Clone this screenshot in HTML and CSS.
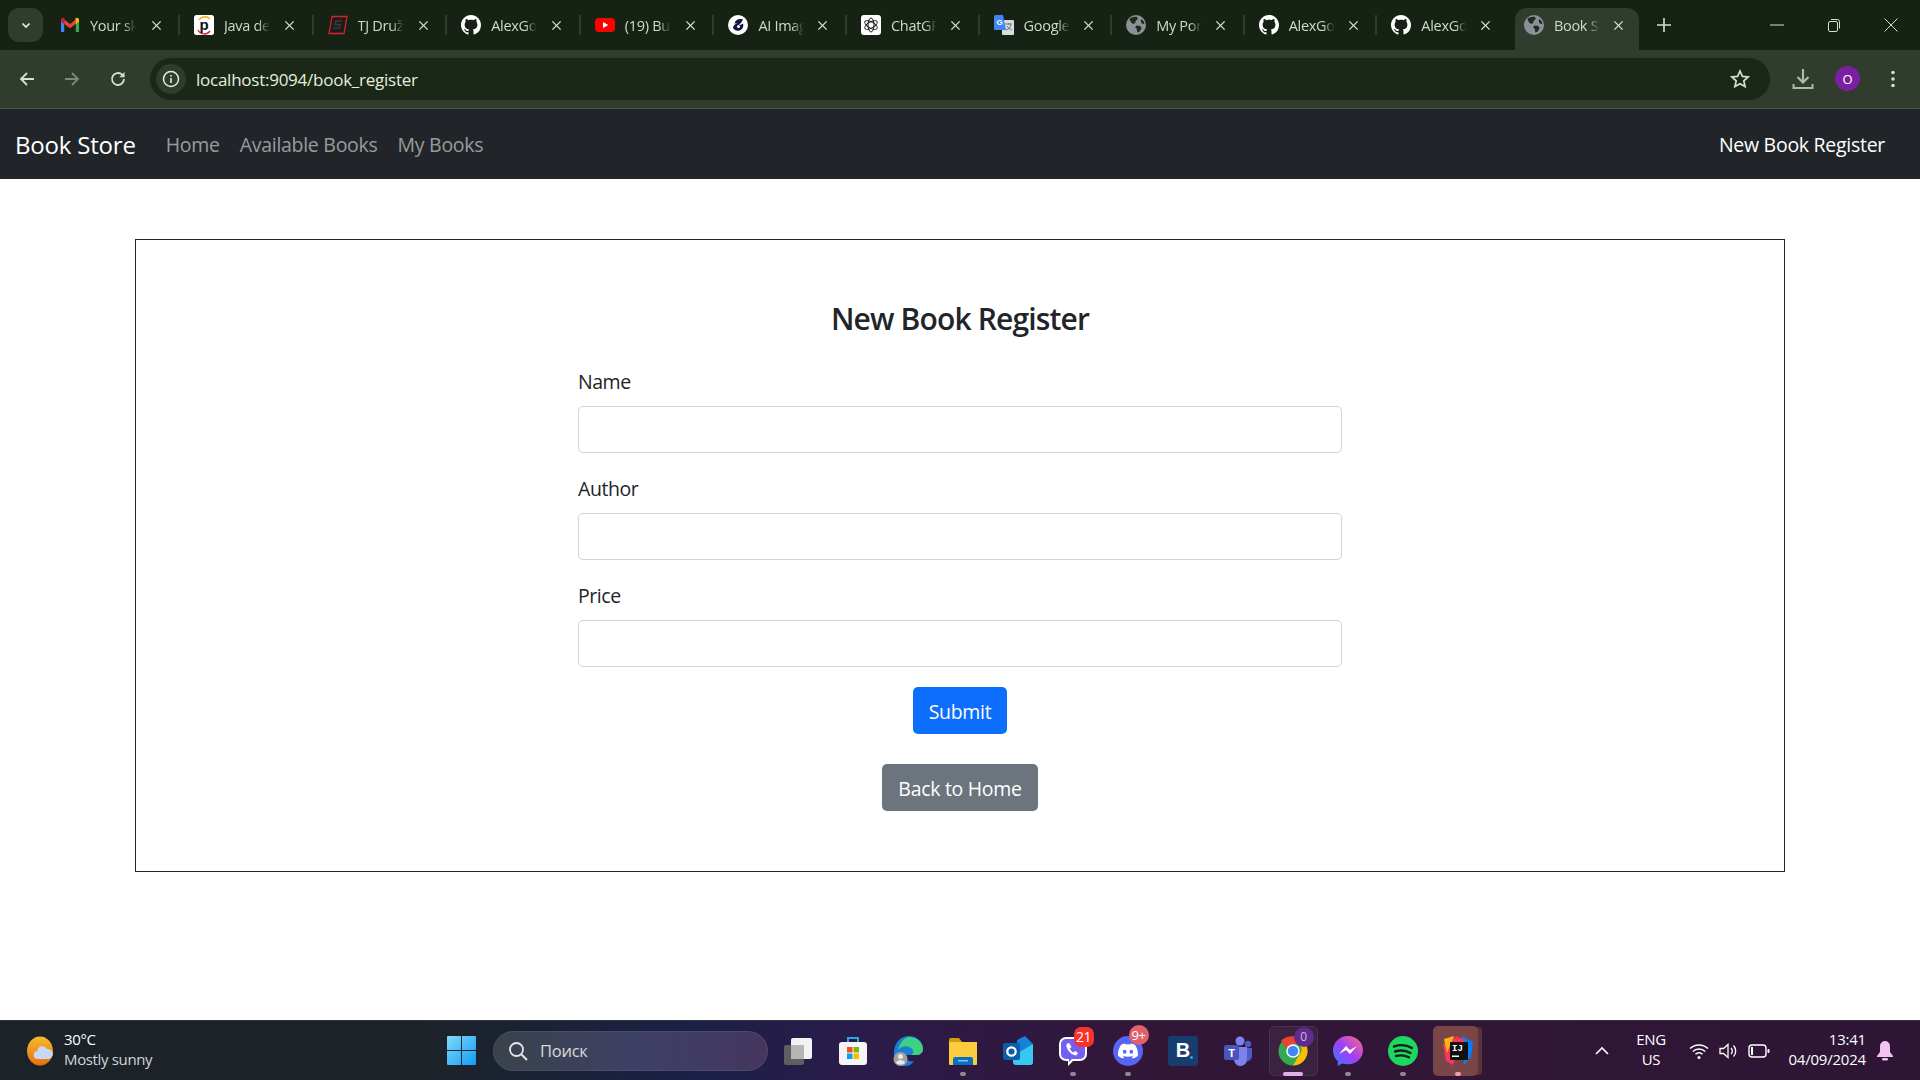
FILE: index.html
```html
<!DOCTYPE html>
<html lang="en">
<head>
<meta charset="utf-8">
<title>Book Store</title>
<link rel="stylesheet" href="styles.css">
</head>
<body>
<svg class="defs" width="0" height="0" aria-hidden="true">
  <defs>
    <symbol id="gh" viewBox="0 0 16 16"><path fill="#fff" d="M8 0C3.58 0 0 3.58 0 8c0 3.54 2.29 6.53 5.47 7.59.4.07.55-.17.55-.38 0-.19-.01-.82-.01-1.49-2.01.37-2.53-.49-2.69-.94-.09-.23-.48-.94-.82-1.13-.28-.15-.68-.52-.01-.53.63-.01 1.08.58 1.23.82.72 1.21 1.87.87 2.33.66.07-.52.28-.87.51-1.07-1.78-.2-3.64-.89-3.64-3.95 0-.87.31-1.59.82-2.15-.08-.2-.36-1.02.08-2.12 0 0 .67-.21 2.2.82.64-.18 1.32-.27 2-.27.68 0 1.36.09 2 .27 1.53-1.04 2.2-.82 2.2-.82.44 1.1.16 1.92.08 2.12.51.56.82 1.27.82 2.15 0 3.07-1.87 3.75-3.65 3.95.29.25.54.73.54 1.48 0 1.07-.01 1.93-.01 2.2 0 .21.15.46.55.38A8.013 8.013 0 0016 8c0-4.42-3.58-8-8-8z"/></symbol>
    <symbol id="globe" viewBox="0 0 18 18"><circle cx="9" cy="9" r="9" fill="#8b9198"/><path fill="#1f2a1d" d="M3 3.5c2-1.6 4.5-2.3 7-1.8l.6 2-2 1.6-.4 2.2-2.4.3-1.6-1.8zM9.5 9.5l3.3.4 1.3 2-2 3.2-1.8.7-.7-3.5-1.5-1.3zM14 3.5l2 2.4.6 2.4-2.6-.8-.8-2.4z"/></symbol>
    <symbol id="x" viewBox="0 0 12 12"><path d="M1.5 1.5l9 9M10.5 1.5l-9 9" stroke="#d5e0cf" stroke-width="1.5" fill="none"/></symbol>
  </defs>
</svg>

<header class="chrome">
  <div class="tabstrip">
    <button class="tab-search" type="button"><svg class="ic12" viewBox="0 0 12 12"><path d="M2.5 4.5L6 8l3.5-3.5" stroke="#e4eede" stroke-width="1.7" fill="none"/></svg></button>
    <div class="tabs">
      <div class="tab">
        <svg class="fav" viewBox="0 0 20 20"><path fill="#4285f4" d="M1 17h3.2V8.6L1 5.4z"/><path fill="#34a853" d="M15.8 17H19V5.4l-3.2 3.2z"/><path fill="#ea4335" d="M4.2 9V4.5L10 9l5.8-4.5V9L10 13.2z"/><path fill="#c5221f" d="M1 5.2C1 3 3.3 2.2 4.6 3.5L4.2 9 1 6.5z"/><path fill="#fbbc04" d="M19 5.2c0-2.2-2.3-3-3.6-1.7l.4 5.5L19 6.500z"/></svg>
        <span class="tab-title">Your sk</span><svg class="close" viewBox="0 0 12 12"><use href="#x"/></svg>
      </div>
      <div class="tab">
        <svg class="fav" viewBox="0 0 20 20"><rect width="20" height="20" rx="2.500" fill="#fff"/><path d="M5 5a7 7 0 0 1 11-1" stroke="#f5a623" stroke-width="1.400" fill="none"/><path d="M4 15a7 7 0 0 0 12 1" stroke="#d8232a" stroke-width="1.400" fill="none"/><text x="10" y="14.500" class="fav-p">p</text></svg>
        <span class="tab-title">Java de</span><svg class="close" viewBox="0 0 12 12"><use href="#x"/></svg>
      </div>
      <div class="tab">
        <svg class="fav" viewBox="0 0 20 20"><path d="M4 1.500h15l-3 17H1z" fill="#1c1c1c" stroke="#d8232a" stroke-width="1.300" stroke-linejoin="round"/><path d="M14 6H8L7 9.500h5L11 13H5" stroke="#3b3b3b" stroke-width="1.600" fill="none"/></svg>
        <span class="tab-title">TJ Druž</span><svg class="close" viewBox="0 0 12 12"><use href="#x"/></svg>
      </div>
      <div class="tab">
        <svg class="fav"><use href="#gh"/></svg>
        <span class="tab-title">AlexGo</span><svg class="close" viewBox="0 0 12 12"><use href="#x"/></svg>
      </div>
      <div class="tab">
        <svg class="fav" viewBox="0 0 20 20"><rect y="3" width="20" height="14" rx="4" fill="#f00"/><path d="M8 7l5.200 3L8 13z" fill="#fff"/></svg>
        <span class="tab-title">(19) Bu</span><svg class="close" viewBox="0 0 12 12"><use href="#x"/></svg>
      </div>
      <div class="tab">
        <svg class="fav" viewBox="0 0 20 20"><circle cx="10" cy="10" r="10" fill="#fff"/><path d="M15 4.500c-4-1.500-8 .5-8.500 4l3.500-.5c-3 1-5 2.500-5 5 1 2 4 3.500 6.500 2.500 3-1 4.500-4 3.500-7-1.500 1-3 1.500-4 1.500 1.500-1.500 3-3.500 4-5.500z" fill="#141640"/><circle cx="10.500" cy="11.500" r="1.500" fill="#fff"/></svg>
        <span class="tab-title">AI Imag</span><svg class="close" viewBox="0 0 12 12"><use href="#x"/></svg>
      </div>
      <div class="tab">
        <svg class="fav" viewBox="0 0 20 20"><rect width="20" height="20" rx="3" fill="#fff"/><g fill="none" stroke="#1a1a1a" stroke-width="1"><ellipse cx="10" cy="10" rx="3" ry="7"/><ellipse cx="10" cy="10" rx="3" ry="7" transform="rotate(60 10 10)"/><ellipse cx="10" cy="10" rx="3" ry="7" transform="rotate(120 10 10)"/></g></svg>
        <span class="tab-title">ChatGP</span><svg class="close" viewBox="0 0 12 12"><use href="#x"/></svg>
      </div>
      <div class="tab">
        <svg class="fav" viewBox="0 0 20 20"><rect x="8" y="5" width="12" height="15" rx="1" fill="#d9dce0"/><path d="M11 9h7M14.500 8v1.500M12 15c3-1 4.500-3 5-5.500M13 11c1 2 3 3.500 5 4" stroke="#6b7076" stroke-width="1" fill="none"/><path d="M1.500 0H9l3 15H1.500A1.500 1.500 0 0 1 0 13.500V1.500A1.500 1.500 0 0 1 1.500 0z" fill="#4285f4"/><text x="5.500" y="10" class="fav-g">G</text></svg>
        <span class="tab-title">Google</span><svg class="close" viewBox="0 0 12 12"><use href="#x"/></svg>
      </div>
      <div class="tab">
        <svg class="fav"><use href="#globe"/></svg>
        <span class="tab-title">My Por</span><svg class="close" viewBox="0 0 12 12"><use href="#x"/></svg>
      </div>
      <div class="tab">
        <svg class="fav"><use href="#gh"/></svg>
        <span class="tab-title">AlexGo</span><svg class="close" viewBox="0 0 12 12"><use href="#x"/></svg>
      </div>
      <div class="tab tab-presel">
        <svg class="fav"><use href="#gh"/></svg>
        <span class="tab-title">AlexGo</span><svg class="close" viewBox="0 0 12 12"><use href="#x"/></svg>
      </div>
      <div class="tab tab-active">
        <svg class="fav"><use href="#globe"/></svg>
        <span class="tab-title">Book S</span><svg class="close" viewBox="0 0 12 12"><use href="#x"/></svg>
      </div>
    </div>
    <svg class="newtab" viewBox="0 0 14 14"><path d="M7 0v14M0 7h14" stroke="#d5e0cf" stroke-width="1.600"/></svg>
    <div class="winctl">
      <svg class="win-btn" viewBox="0 0 14 14"><path d="M0 7h14" stroke="#d5e0cf" stroke-width="1"/></svg>
      <svg class="win-btn" viewBox="0 0 14 14"><rect x="1.500" y="3.500" width="9" height="10" rx="1.500" fill="none" stroke="#d5e0cf"/><path d="M4 1.500h6.500a2 2 0 0 1 2 2v7" fill="none" stroke="#d5e0cf"/></svg>
      <svg class="win-btn" viewBox="0 0 14 14"><path d="M.5.500l13 13M13.500.500l-13 13" stroke="#d5e0cf" stroke-width="1"/></svg>
    </div>
  </div>
  <div class="toolbar">
    <svg class="tool" viewBox="0 0 18 18"><path d="M16 9H3M9 3L3 9l6 6" stroke="#d5e0cf" stroke-width="1.800" fill="none"/></svg>
    <svg class="tool" viewBox="0 0 18 18"><path d="M2 9h13M9 3l6 6-6 6" stroke="#7d8a78" stroke-width="1.800" fill="none"/></svg>
    <svg class="tool" viewBox="0 0 18 18"><path d="M15 9a6 6 0 1 1-1.800-4.300L15 6.500" stroke="#d5e0cf" stroke-width="1.800" fill="none"/><path d="M15.500 2v5.200h-5.200z" fill="#d5e0cf"/></svg>
    <div class="omnibox">
      <span class="info"><svg class="ic18" viewBox="0 0 18 18"><circle cx="9" cy="9" r="7.500" fill="none" stroke="#e4eede" stroke-width="1.500"/><path d="M9 8v5M9 5v1.600" stroke="#e4eede" stroke-width="1.600"/></svg></span>
      <span class="url">localhost:9094/book_register</span>
      <svg class="star" viewBox="0 0 20 20"><path d="M10 2l2.400 5.400 5.800.6-4.400 3.900 1.300 5.700L10 14.700l-5.100 2.900 1.300-5.700L1.800 8l5.800-.6z" fill="none" stroke="#d5e0cf" stroke-width="1.700"/></svg>
    </div>
    <svg class="tool-dl" viewBox="0 0 22 22"><path d="M11 1v13M5.500 9l5.500 5.500L16.500 9" stroke="#a9bda3" stroke-width="2.200" fill="none"/><path d="M1.500 16v4h19v-4" stroke="#a9bda3" stroke-width="2" fill="none"/></svg>
    <span class="avatar">O</span>
    <svg class="tool-menu" viewBox="0 0 4 18"><circle cx="2" cy="2.500" r="1.800" fill="#d5e0cf"/><circle cx="2" cy="9" r="1.800" fill="#d5e0cf"/><circle cx="2" cy="15.500" r="1.800" fill="#d5e0cf"/></svg>
  </div>
</header>

<nav class="navbar">
  <a class="brand" href="#">Book Store</a>
  <a class="nav-link" href="#">Home</a>
  <a class="nav-link" href="#">Available Books</a>
  <a class="nav-link" href="#">My Books</a>
  <a class="nav-link nav-right" href="#">New Book Register</a>
</nav>

<main class="page">
  <section class="card">
    <h3 class="heading">New Book Register</h3>
    <form class="form">
      <div class="field"><label class="label" for="name">Name</label><input class="input" id="name" type="text"></div>
      <div class="field"><label class="label" for="author">Author</label><input class="input" id="author" type="text"></div>
      <div class="field"><label class="label" for="price">Price</label><input class="input" id="price" type="text"></div>
      <div class="btn-row"><button class="btn btn-primary" type="button">Submit</button></div>
    </form>
    <div class="btn-row btn-row-back"><a class="btn btn-secondary" href="#">Back to Home</a></div>
  </section>
</main>

<footer class="taskbar">
  <div class="weather">
    <svg class="weather-ic" viewBox="0 0 28 30"><defs><linearGradient id="sun" x1="0" y1="0" x2="0" y2="1"><stop offset="0" stop-color="#f2bb2a"/><stop offset="1" stop-color="#ec6d10"/></linearGradient></defs><ellipse cx="13" cy="15" rx="13" ry="14.500" fill="url(#sun)"/><path d="M11 23a4 4 0 0 1-.5-8 5 5 0 0 1 9.500-2 5 5 0 0 1 1.500 10z" fill="#c5d9f5"/></svg>
    <div class="weather-text"><span class="temp">30°C</span><span class="cond">Mostly sunny</span></div>
  </div>
  <svg class="winlogo" viewBox="0 0 29 29"><defs><linearGradient id="wl" x1="0" y1="0" x2="1" y2="1"><stop offset="0" stop-color="#7fdcf8"/><stop offset="1" stop-color="#0f9cf5"/></linearGradient></defs><path fill="url(#wl)" d="M1 0h13v14H0V1a1 1 0 0 1 1-1zM15 0h13a1 1 0 0 1 1 1v13H15zM0 15h14v14H1a1 1 0 0 1-1-1zM15 15h14v13a1 1 0 0 1-1 1H15z"/></svg>
  <div class="searchbox">
    <svg class="ic20" viewBox="0 0 20 20"><circle cx="8.500" cy="8.500" r="6.500" fill="none" stroke="#e6e6e6" stroke-width="1.800"/><path d="M13.500 13.500L19 19" stroke="#e6e6e6" stroke-width="2"/></svg>
    <span class="search-text">Поиск</span>
  </div>
  <div class="apps">
    <div class="app"><svg class="app-ic" viewBox="0 0 30 30"><rect x="1" y="9" width="20" height="20" rx="2" fill="#5f5f5f"/><rect x="8" y="2" width="21" height="21" rx="2" fill="#f2f2f2"/><rect x="8" y="9" width="13" height="14" fill="#b5b5b5"/></svg></div>
    <div class="app"><svg class="app-ic" viewBox="0 0 30 30"><path d="M10 7V2h10v5" fill="none" stroke="#2aa6e8" stroke-width="2"/><rect x="1" y="6" width="28" height="23" rx="3" fill="#f4f4f4"/><rect x="9" y="11" width="5.500" height="5.500" fill="#f25022"/><rect x="15.500" y="11" width="5.500" height="5.500" fill="#7fba00"/><rect x="9" y="17.500" width="5.500" height="5.500" fill="#00a4ef"/><rect x="15.500" y="17.500" width="5.500" height="5.500" fill="#ffb900"/></svg></div>
    <div class="app"><svg class="app-ic" viewBox="0 0 30 30"><path d="M1 15C2 5 9 0 16 0c8 0 14 6 14 13 0 4-3 6-7 6H12c0 5 4 7 9 6-2 3-5 5-9 5C5 30 0 23 1 15z" fill="#1a7fd4"/><path d="M30 13c0 4-3 6-7 6h-5c3-1 3-5 0-7-4-3-10-2-13 2C7 6 12 1 16 1c8 0 14 5 14 12z" fill="#3ed17f"/><circle cx="7.500" cy="23" r="7" fill="#9e9e9e"/><circle cx="7.500" cy="20.500" r="2.500" fill="#e8e8e8"/><path d="M3 27c1-4 8-4 9 0-2 2-7 2-9 0z" fill="#e8e8e8"/></svg></div>
    <div class="app"><svg class="app-ic" viewBox="0 0 30 30"><path d="M1 4a2 2 0 0 1 2-2h8l3 4h15v6H1z" fill="#d69a10"/><path d="M1 6h28v22a1 1 0 0 1-1 1H2a1 1 0 0 1-1-1z" fill="#fbcd3e"/><path d="M5 29v-6a2 2 0 0 1 2-2h16a2 2 0 0 1 2 2v6z" fill="#0a6fc2"/><rect x="10" y="24" width="10" height="1.500" fill="#7fc4f5"/></svg><span class="pip"></span></div>
    <div class="app"><svg class="app-ic" viewBox="0 0 30 30"><path d="M14 4l8-4 8 8v18a3 3 0 0 1-3 3H13z" fill="#1283d8"/><path d="M10 20l20-12v18a3 3 0 0 1-3 3H13a3 3 0 0 1-3-3z" fill="#35c9f0"/><rect x="0" y="7" width="17" height="17" rx="2" fill="#0c5ea8"/><circle cx="8.500" cy="15.500" r="4.200" fill="none" stroke="#fff" stroke-width="2.200"/></svg></div>
    <div class="app"><svg class="app-ic" viewBox="0 0 30 30"><path d="M8 1h14a7 7 0 0 1 7 7v10a7 7 0 0 1-7 7h-7l-5 5v-5H8a7 7 0 0 1-7-7V8a7 7 0 0 1 7-7z" fill="#fff"/><path d="M8 3h14a5 5 0 0 1 5 5v10a5 5 0 0 1-5 5h-8l-3 3v-3H8a5 5 0 0 1-5-5V8a5 5 0 0 1 5-5z" fill="#7360f2"/><path d="M10 7c-2 1-2 3-1 5 1 3 4 6 7 7 2 1 3 0 4-2l-3-2-1.500 1.500c-2-1-3-2.500-3.800-4L13.500 11 11.500 7.500z" fill="#fff"/></svg><span class="badge badge-red">21</span><span class="pip"></span></div>
    <div class="app"><svg class="app-ic" viewBox="0 0 30 30"><circle cx="15" cy="15" r="15" fill="#5865f2"/><svg x="5" y="5" width="20" height="20" viewBox="0 0 24 24"><path fill="#fff" d="M20.317 4.37a19.791 19.791 0 0 0-4.885-1.515.074.074 0 0 0-.079.037c-.21.375-.444.864-.608 1.25a18.27 18.27 0 0 0-5.487 0 12.64 12.64 0 0 0-.617-1.25.077.077 0 0 0-.079-.037A19.736 19.736 0 0 0 3.677 4.37a.07.07 0 0 0-.032.027C.533 9.046-.32 13.58.099 18.057a.082.082 0 0 0 .031.057 19.9 19.9 0 0 0 5.993 3.03.078.078 0 0 0 .084-.028 14.09 14.09 0 0 0 1.226-1.994.076.076 0 0 0-.041-.106 13.107 13.107 0 0 1-1.872-.892.077.077 0 0 1-.008-.128 10.2 10.2 0 0 0 .372-.292.074.074 0 0 1 .077-.01c3.928 1.793 8.18 1.793 12.062 0a.074.074 0 0 1 .078.01c.12.098.246.198.373.292a.077.077 0 0 1-.006.127 12.299 12.299 0 0 1-1.873.892.077.077 0 0 0-.041.107c.36.698.772 1.362 1.225 1.993a.076.076 0 0 0 .084.028 19.839 19.839 0 0 0 6.002-3.03.077.077 0 0 0 .032-.054c.5-5.177-.838-9.674-3.549-13.66a.061.061 0 0 0-.031-.03zM8.020 15.330c-1.183 0-2.157-1.085-2.157-2.419 0-1.333.956-2.419 2.157-2.419 1.210 0 2.176 1.096 2.157 2.420 0 1.333-.956 2.418-2.157 2.418zm7.975 0c-1.183 0-2.157-1.085-2.157-2.419 0-1.333.955-2.419 2.157-2.419 1.210 0 2.176 1.096 2.157 2.420 0 1.333-.946 2.418-2.157 2.418z"/></svg></svg><span class="badge badge-pink">9+</span><span class="pip"></span></div>
    <div class="app"><span class="booking">B<i class="booking-dot"></i></span></div>
    <div class="app"><svg class="app-ic" viewBox="0 0 30 30"><circle cx="17" cy="5" r="4.500" fill="#7b83eb"/><circle cx="25" cy="8" r="3.200" fill="#5059c9"/><path d="M21 12h8v9a5 5 0 0 1-6 4z" fill="#5059c9"/><path d="M9 11h15v12a6.500 6.500 0 0 1-13 1z" fill="#7b83eb"/><rect x="1" y="9" width="15" height="15" rx="2" fill="#4b53bc"/><text x="8.500" y="21" class="teams-t">T</text></svg></div>
    <div class="app app-box"><svg class="app-ic" viewBox="0 0 30 30"><circle cx="15" cy="15" r="14.500" fill="#34a853"/><path d="M15 .5A14.500 14.500 0 0 1 28 8.500H15A6.500 6.500 0 0 0 8.800 13L3 4.800A14.500 14.500 0 0 1 15 .5z" fill="#ea4335"/><path d="M28 8.500A14.500 14.500 0 0 1 15 29.500l6-10.500a6.500 6.500 0 0 0 0-10.500z" fill="#fbbc04"/><circle cx="15" cy="15" r="6.800" fill="#fff"/><circle cx="15" cy="15" r="5.300" fill="#4285f4"/></svg><span class="badge badge-purple">0</span><span class="pip pip-wide"></span></div>
    <div class="app"><svg class="app-ic" viewBox="0 0 30 30"><defs><linearGradient id="ms" x1="0" y1="1" x2="1" y2="0"><stop offset="0" stop-color="#2f7bff"/><stop offset=".5" stop-color="#a23ef5"/><stop offset="1" stop-color="#ff6f7d"/></linearGradient></defs><path d="M15 0C6.500 0 0 6.200 0 14.500c0 4.300 1.800 8 4.700 10.600V30l4.500-2.500c1.800.5 3.700.8 5.800.8 8.500 0 15-6.200 15-14S23.500 0 15 0z" fill="url(#ms)"/><path d="M6 18l7-8 4 4 7-4-7 8-4-4z" fill="#fff"/></svg><span class="pip"></span></div>
    <div class="app"><svg class="app-ic" viewBox="0 0 30 30"><circle cx="15" cy="15" r="15" fill="#1ed760"/><path d="M6 10.500c6-2 13-1.500 18 1.500M7 15.500c5-1.500 11-1 15.500 1.500M8 20c4-1 9-.8 13 1.300" stroke="#14221a" stroke-width="2.400" stroke-linecap="round" fill="none"/></svg><span class="pip"></span></div>
    <div class="app app-active"><svg class="app-ic" viewBox="0 0 30 30"><path d="M0 8l11-7 6 4-7 24-7-4z" fill="#f7375c"/><path d="M1 3l10-3-7 17z" fill="#fdb60d"/><path d="M19 0l11 6-2 15-7 8z" fill="#087cfa"/><path d="M13 0l9 4-6 8z" fill="#fe315d"/><rect x="7" y="6" width="18" height="18" fill="#111"/><text x="9" y="15" class="ij-t">IJ</text><rect x="9" y="19.500" width="7" height="1.500" fill="#fff"/></svg><span class="pip pip-pink"></span></div>
  </div>
  <div class="tray">
    <svg class="chev" viewBox="0 0 14 8"><path d="M1 7l6-6 6 6" stroke="#fff" stroke-width="1.600" fill="none"/></svg>
    <div class="lang"><span>ENG</span><span>US</span></div>
    <svg class="tray-ic tray-wifi" viewBox="0 0 20 18"><path d="M1 6.500a13 13 0 0 1 18 0M3.800 9.500a9 9 0 0 1 12.400 0M6.500 12.300a5 5 0 0 1 7 0" stroke="#fff" stroke-width="1.500" fill="none"/><circle cx="10" cy="15.500" r="1.500" fill="#fff"/></svg>
    <svg class="tray-ic tray-vol" viewBox="0 0 20 18"><path d="M1 6.500h3.500L9 2.500v13l-4.500-4H1z" fill="none" stroke="#fff" stroke-width="1.300"/><path d="M12 6a4 4 0 0 1 0 6M14.500 3.500a8 8 0 0 1 0 11" stroke="#fff" stroke-width="1.300" fill="none"/></svg>
    <svg class="tray-ic tray-bat" viewBox="0 0 22 16"><rect x="1" y="2" width="17" height="12" rx="3" fill="none" stroke="#fff" stroke-width="1.400"/><rect x="3" y="4" width="2" height="8" fill="#fff"/><rect x="19.500" y="6" width="2" height="4" rx="1" fill="#fff"/></svg>
    <div class="clock"><span>13:41</span><span>04/09/2024</span></div>
    <svg class="bell" viewBox="0 0 16 20"><path d="M8 0a5 5 0 0 1 5 5v6l3 4v1H0v-1l3-4V5a5 5 0 0 1 5-5z" fill="#efc2f0"/><rect x="5" y="17" width="6" height="2.500" rx="1.200" fill="#efc2f0"/></svg>
  </div>
</footer>
</body>
</html>
```
FILE: styles.css
```css
* { box-sizing: border-box; }
html, body { margin: 0; height: 100%; overflow: hidden; }
body {
  display: flex;
  flex-direction: column;
  height: 1080px;
  background: #fff;
  color: #212529;
  font-family: "Open Sans", "Noto Sans", sans-serif;
}
.defs { position: absolute; }
svg { display: block; flex: none; overflow: visible; }

/* browser chrome */
.chrome { flex: none; }
.tabstrip {
  height: 50px;
  background: #162213;
  display: flex;
  align-items: flex-start;
  padding-left: 8px;
}
.tab-search {
  width: 35px;
  height: 34px;
  margin-top: 8px;
  border: 0;
  border-radius: 11px;
  background: #303c2d;
  display: flex;
  align-items: center;
  justify-content: center;
  padding: 0;
}
.ic12 { width: 12px; height: 12px; }
.tabs { display: flex; margin-left: 3px; margin-top: 8px; height: 42px; }
.tab {
  width: 132.600px;
  height: 42px;
  display: flex;
  align-items: center;
  padding: 0 18.500px 8px 14px;
  position: relative;
}
.tab:first-child { width: 134px; }
.tab:nth-child(n+2):nth-child(-n+5) { width: 133.600px; }
.tab::after {
  content: "";
  position: absolute;
  right: 0;
  top: 7px;
  height: 20px;
  width: 2px;
  background: #303c2d;
}
.tab-presel::after, .tab-active::after { display: none; }
.tab.tab-active {
  width: 124px;
  background: #303c2d;
  border-radius: 12px 12px 0 0;
  padding: 0 14.500px 8px 9px;
  margin-left: 5px;
}
.fav { width: 20px; height: 20px; }
.fav-p { font: 700 15px "Liberation Sans", sans-serif; fill: #111; text-anchor: middle; }
.fav-g { font: 700 8px "Liberation Sans", sans-serif; fill: #fff; text-anchor: middle; }
.tab-title {
  width: 52px;
  margin-left: 10px;
  overflow: hidden;
  white-space: nowrap;
  font-size: 14.500px;
  letter-spacing: -0.3px;
  color: #cfdac9;
  -webkit-mask-image: linear-gradient(to right, #000 65%, transparent 88%);
  mask-image: linear-gradient(to right, #000 65%, transparent 88%);
}
.close { width: 11px; height: 11px; margin-left: auto; }
.newtab { width: 14px; height: 14px; margin: 18px 0 0 18px; }
.winctl { display: flex; margin-left: auto; margin-top: 18px; }
.win-btn { width: 14px; height: 14px; margin-right: 43px; }
.win-btn:last-child { margin-right: 22px; }

.toolbar {
  height: 59px;
  background: #303c2d;
  border-bottom: 1px solid #4a5647;
  display: flex;
  align-items: center;
  padding: 0 21px 1px 18px;
}
.tool { width: 18px; height: 18px; margin-right: 27px; }
.tool:nth-child(2) { margin-right: 28px; }
.tool:nth-child(3) { margin-right: 23px; }
.omnibox {
  width: 1620px;
  height: 42px;
  background: #1b2818;
  border-radius: 21px;
  display: flex;
  align-items: center;
  padding: 0 20px 0 6px;
}
.info {
  width: 30px;
  height: 30px;
  border-radius: 50%;
  background: #303c2d;
  display: flex;
  align-items: center;
  justify-content: center;
}
.ic18 { width: 18px; height: 18px; }
.url {
  margin-left: 10px;
  padding-top: 1px;
  font-size: 17px;
  letter-spacing: -0.25px;
  color: #e4eede;
}
.star { width: 20px; height: 20px; margin-left: auto; }
.tool-dl { width: 22px; height: 22px; margin-left: 22px; }
.avatar {
  width: 25px;
  height: 25px;
  margin-left: 21px;
  border-radius: 50%;
  background: #7b1fa2;
  color: #fff;
  font-size: 13px;
  display: flex;
  align-items: center;
  justify-content: center;
}
.tool-menu { width: 4px; height: 18px; margin-left: 31px; }

/* navbar */
.navbar {
  flex: none;
  height: 70px;
  background: #212529;
  display: flex;
  align-items: center;
  padding: 0 35px 0 15px;
}
.brand {
  color: #fff;
  font-size: 24px;
  letter-spacing: -0.2px;
  text-decoration: none;
  margin-right: 20px;
}
.nav-link {
  color: rgba(255, 255, 255, .55);
  font-size: 19.500px;
  letter-spacing: -0.28px;
  text-decoration: none;
  padding: 0 10px;
}
.nav-right { margin-left: auto; color: #fff; padding: 0; }

/* page */
.page { flex: 1; padding: 60px 135px 0; }
.card {
  border: 1px solid #212529;
  padding: 60px;
}
.heading {
  margin: 0 0 24px;
  text-align: center;
  font-size: 30px;
  font-weight: 600;
  line-height: 38px;
  padding-bottom: 4px;
  letter-spacing: -0.85px;
  color: #212529;
}
.form { width: 764px; margin: 0 auto; }
.field { margin-bottom: 20px; }
.label {
  display: block;
  font-size: 19.500px;
  line-height: 29px;
  padding-top: 1px;
  letter-spacing: -0.45px;
  margin-bottom: 10px;
}
.input {
  display: block;
  width: 100%;
  height: 47px;
  border: 1px solid #ced4da;
  border-radius: 5px;
  background: #fff;
}
.btn-row { display: flex; justify-content: center; }
.btn-row-back { margin-top: 30px; }
.btn {
  height: 47px;
  border: 0;
  border-radius: 5px;
  padding: 1px 16px 0;
  display: inline-flex;
  align-items: center;
  justify-content: center;
  color: #fff;
  font-family: inherit;
  font-size: 19.500px;
  letter-spacing: -0.3px;
  text-decoration: none;
}
.btn-primary { background: #0d6efd; width: 94px; }
.btn-secondary { background: #6c757d; width: 156px; }

/* taskbar */
.taskbar {
  flex: none;
  height: 60px;
  display: flex;
  align-items: center;
  color: #fff;
  border-top: 1px solid #33323c;
  background: linear-gradient(90deg, #1c2328 0, #1c2328 22%, #1a2046 36%, #2a1c4a 44%, #321638 60%, #2e1535 100%);
}
.weather { width: 447px; display: flex; align-items: center; padding-left: 27px; }
.weather-ic { width: 28px; height: 30px; }
.weather-text {
  display: flex;
  flex-direction: column;
  margin: 0 0 3px 9px;
  font-size: 15px;
  line-height: 20px;
  letter-spacing: -0.35px;
}
.temp { color: #fff; }
.cond { color: #d4d6d8; }
.winlogo { width: 29px; height: 29px; }
.searchbox {
  width: 275px;
  height: 40px;
  margin-left: 17px;
  border-radius: 20px;
  background: linear-gradient(90deg, #3a434c, #3e3f66 55%, #45365f);
  border: 1px solid #4a4f63;
  display: flex;
  align-items: center;
  padding-left: 14px;
}
.ic20 { width: 20px; height: 20px; }
.search-text { margin-left: 12px; font-size: 16.500px; letter-spacing: -0.25px; color: #d8dadc; }
.apps { display: flex; margin-left: 2.500px; }
.app {
  width: 55px;
  height: 50px;
  display: flex;
  align-items: center;
  justify-content: center;
  position: relative;
}
.app-ic { width: 30px; height: 30px; position: relative; }
.pip {
  position: absolute;
  left: 50%;
  bottom: 0;
  width: 6px;
  height: 4px;
  margin-left: -3px;
  border-radius: 2px;
  background: #8e8a90;
}
.pip-wide { width: 20px; margin-left: -10px; background: #e0b0e8; }
.pip-pink { background: #ef9fae; }
.badge {
  position: absolute;
  left: 28px;
  top: 1px;
  min-width: 20px;
  height: 20px;
  border-radius: 7px;
  color: #fff;
  font-size: 14px;
  letter-spacing: -0.4px;
  display: flex;
  align-items: center;
  justify-content: center;
}
.badge-red { background: #f9322c; }
.badge-pink { background: #e0616b; border-radius: 50%; font-size: 13px; top: -1px; }
.badge-purple { background: #5f2b8c; border-radius: 50%; color: #d8b4e8; font-size: 12px; left: 28px; top: 1px; }
.booking {
  width: 30px;
  height: 30px;
  border-radius: 3px;
  background: #163d6e;
  color: #fff;
  font: 700 20px "Liberation Sans", sans-serif;
  display: flex;
  align-items: center;
  justify-content: center;
  position: relative;
}
.booking-dot {
  width: 3px;
  height: 3px;
  background: #27a7df;
  border-radius: 50%;
  position: absolute;
  right: 5px;
  bottom: 7px;
}
.teams-t { font: 700 11px "Liberation Sans", sans-serif; fill: #fff; text-anchor: middle; }
.ij-t { font: 700 9px "Liberation Mono", monospace; fill: #fff; }
.app-box::before, .app-active::before {
  content: "";
  position: absolute;
  top: 0;
  bottom: 0;
  border-radius: 5px;
}
.app-box::before { left: 3px; right: 3px; background: #3b2340; border: 1px solid #4a3150; }
.app-active::before { left: 2.500px; right: 7.500px; background: #7a4546; box-shadow: 5px 0 0 -1px #5c3338; }

.tray { display: flex; align-items: center; margin-left: auto; height: 100%; padding-right: 27px; }
.chev { width: 14px; height: 8px; margin-right: 24px; }
.lang {
  width: 36px;
  display: flex;
  flex-direction: column;
  align-items: center;
  font-size: 15px;
  line-height: 20px;
  letter-spacing: -0.35px;
  margin: 0 20px 3px 0;
}
.tray-ic { height: 18px; }
.tray-wifi { width: 20px; margin-right: 10px; }
.tray-vol { width: 20px; margin-right: 9px; }
.tray-bat { width: 22px; height: 16px; }
.clock {
  margin: 0 0 3px 10px;
  display: flex;
  flex-direction: column;
  align-items: flex-end;
  font-size: 15px;
  line-height: 20px;
  letter-spacing: -0.2px;
  width: 86px;
}
.bell { width: 16px; height: 20px; margin-left: 11px; }
```
